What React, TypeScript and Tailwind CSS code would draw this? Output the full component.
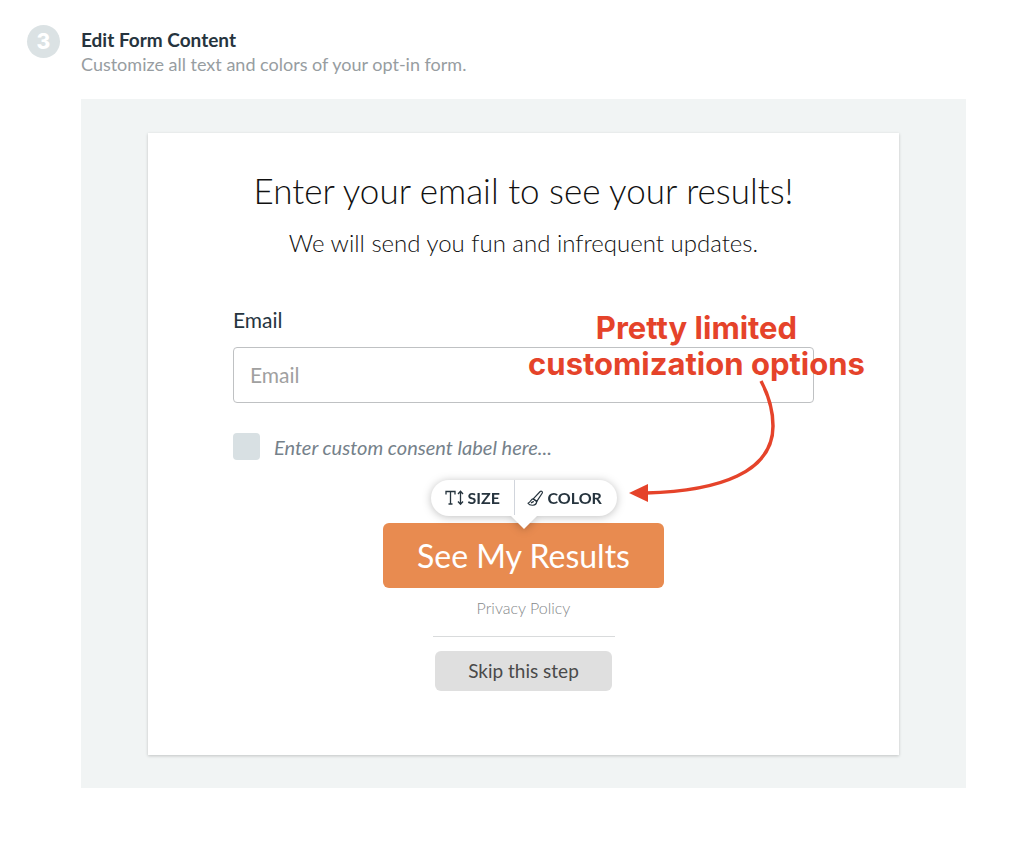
import { useState } from 'react'

const toolBtnCls = 'flex h-9 items-center text-base font-bold text-[#26343e] focus:outline-none'

function TextSizeIcon() {
  return (
    <svg width="19" height="16" viewBox="0 0 19 16" fill="none" stroke="currentColor" strokeWidth="1.3" aria-hidden="true">
      <path d="M1 4.5V1.5H10V4.5M5.5 1.5V14M3.5 14H7.5" />
      <path d="M15.5 1.5V14M13 4L15.5 1.2L18 4M13 11.5L15.5 14.3L18 11.5" />
    </svg>
  )
}

function BrushIcon() {
  return (
    <svg width="17" height="17" viewBox="0 0 17 17" fill="none" stroke="currentColor" strokeWidth="1.2" strokeLinejoin="round" aria-hidden="true">
      <path d="M6.2 8.8L13.2 1.5C14.2 .6 16 1.6 15.3 3L9.8 11.4Z" />
      <path d="M6.2 8.8C3.6 8.8 4.4 12 1 13.2C2.6 15.8 9.4 16.6 9.8 11.4ZM4 12.9L6.8 11.4" />
    </svg>
  )
}

function ButtonToolbar() {
  return (
    <div className="absolute bottom-full left-1/2 mb-[7px] w-[186px] -translate-x-1/2 drop-shadow-[0_1px_4px_rgba(0,0,0,0.25)]">
      <div className="relative flex rounded-full bg-white">
        <button type="button" className={`${toolBtnCls} w-[84px] gap-1 border-r border-gray-300 pl-3.5`}>
          <TextSizeIcon />
          SIZE
        </button>
        <button type="button" className={`${toolBtnCls} flex-1 gap-1 pl-3`}>
          <BrushIcon />
          COLOR
        </button>
      </div>
      <svg className="absolute top-full left-1/2 -mt-px -translate-x-1/2" width="28" height="15" viewBox="0 0 28 15" aria-hidden="true">
        <path d="M0 0H28L14 14Z" fill="#fff" />
      </svg>
    </div>
  )
}

function Callout() {
  return (
    <div className="pointer-events-none absolute top-1 left-1/2 w-[346px] text-[#e5432a]">
      <p className="text-center font-['Inter',sans-serif] text-[31px] leading-9 font-bold whitespace-nowrap">
        Pretty limited
        <br />
        customization options
      </p>
      <svg className="-mt-1 ml-[100px]" width="160" height="130" viewBox="0 0 160 130" fill="none" aria-hidden="true">
        <path d="M137 3C145 18 149 32 149 48C149 94 96 113 22 115" stroke="currentColor" strokeWidth="3.5" />
        <path d="M5 115L24 106V124Z" fill="currentColor" />
      </svg>
    </div>
  )
}

export default function App() {
  const [email, setEmail] = useState('')
  const [consent, setConsent] = useState(false)

  return (
    <main className="flex gap-[21px] bg-white pt-[25px] pr-[58px] pb-[54px] pl-[27px] font-['Lato',sans-serif]">
      <div className="flex size-[33px] shrink-0 items-center justify-center rounded-full bg-[#dbe2e4] font-['Inter',sans-serif] text-[21px] leading-none font-extrabold text-white">
        3
      </div>

      <section className="flex-1">
        <h1 className="pt-[3px] text-[19px] leading-6 font-bold text-[#26343e]">Edit Form Content</h1>
        <p className="text-lg leading-6 text-[#979da1]">Customize all text and colors of your opt-in form.</p>

        {/* Preview */}
        <div className="mt-[23px] bg-[#f1f4f4] px-[67px] pt-[34px] pb-[33px]">
          <div className="bg-white px-[85px] pt-[35px] pb-16 shadow-[0_1px_3px_rgba(0,0,0,0.2)]">
            <h2 className="text-center text-[35px] leading-11 font-light whitespace-nowrap text-[#111]">
              Enter your email to see your results!
            </h2>
            <p className="mt-[15px] text-center text-[24px] leading-8 font-light whitespace-nowrap text-[#111]">
              We will send you fun and infrequent updates.
            </p>

            <form className="relative mt-[47px]" onSubmit={e => e.preventDefault()}>
              <label htmlFor="email" className="block text-[21px] leading-7 text-[#26343e]">Email</label>
              <input
                id="email"
                type="email"
                placeholder="Email"
                value={email}
                onChange={e => setEmail(e.target.value)}
                className="mt-[13px] block h-14 w-full rounded border border-[#bfc1c3] px-4 pb-0.5 text-[21px] text-[#222] placeholder:text-[#a0a0a0] focus:outline-none"
              />

              <div className="mt-[30px] flex items-center gap-3.5">
                <input
                  id="consent"
                  type="checkbox"
                  checked={consent}
                  onChange={e => setConsent(e.target.checked)}
                  className="size-[27px] appearance-none rounded-sm bg-[#d8e0e3] checked:bg-[#26343e]"
                />
                <label htmlFor="consent" className="text-[20px] leading-6 text-[#75818a] italic">
                  Enter custom consent label here...
                </label>
              </div>

              <div className="mt-[63px] flex flex-col items-center">
                <div className="relative">
                  <button type="submit" className="h-[65px] w-[281px] rounded-md bg-[#e88b50] text-[32px] text-white">
                    See My Results
                  </button>
                  <ButtonToolbar />
                </div>
                <a href="#privacy" className="mt-2 text-base leading-6 font-light text-[#85888a]">Privacy Policy</a>
                <hr className="mt-4 w-[182px] border-[#d9dbdc]" />
                <button type="button" className="mt-3.5 h-10 w-[177px] rounded-md bg-[#dfdfdf] text-[19px] text-[#4a4a4a]">
                  Skip this step
                </button>
              </div>

              <Callout />
            </form>
          </div>
        </div>
      </section>
    </main>
  )
}
